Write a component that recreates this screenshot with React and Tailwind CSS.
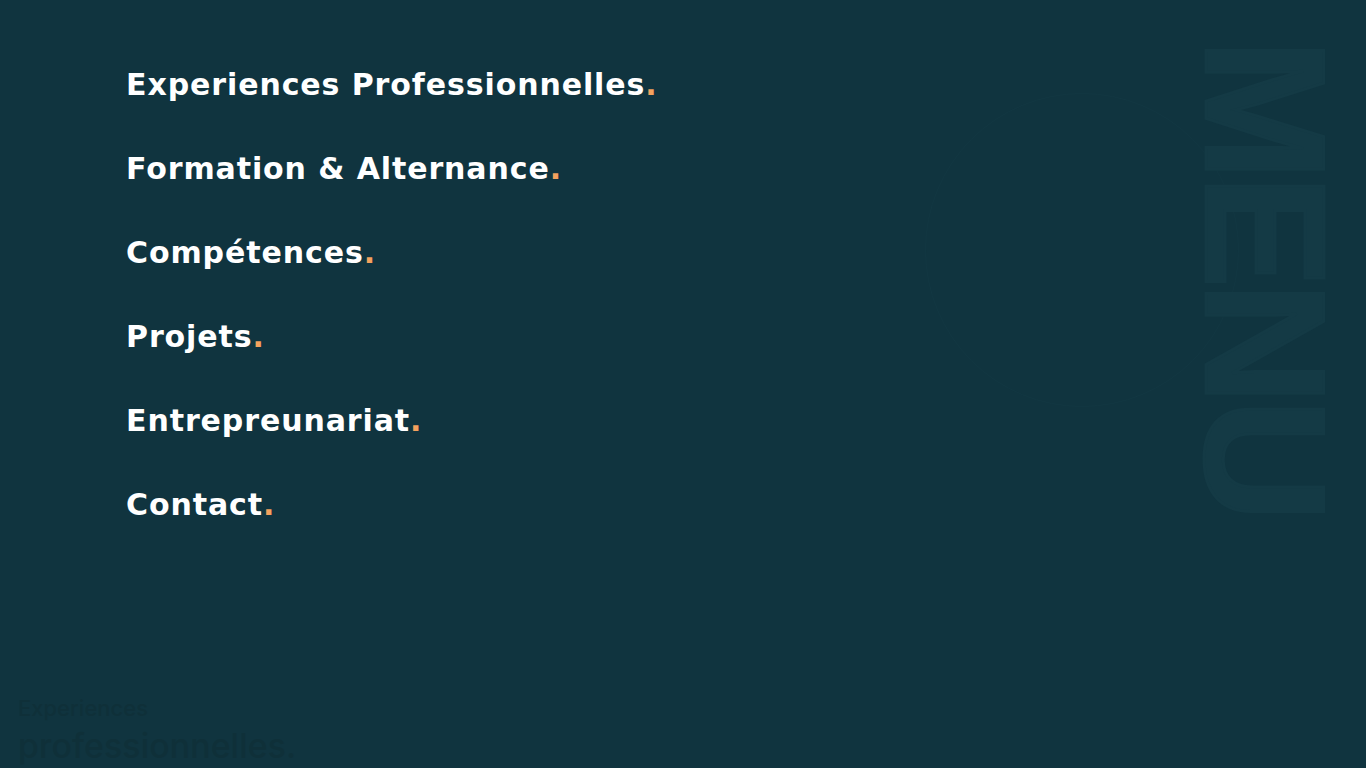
import React from "react";

const items = [
  "Experiences Professionnelles",
  "Formation & Alternance",
  "Compétences",
  "Projets",
  "Entrepreunariat",
  "Contact",
];

export default function App() {
  return (
    <div className="relative h-[768px] w-full overflow-hidden bg-[#10343f] font-['DejaVu_Sans',sans-serif]">
      {/* faint ghost layer of the page behind the menu */}
      <div className="pointer-events-none absolute left-[925px] top-[93px] h-[314px] w-[314px] rounded-full border border-[#123742]" />
      <div className="pointer-events-none absolute left-[18px] top-[697px] flex flex-col font-['Inter',sans-serif] text-[#0f3039]">
        <span className="text-[22px] font-medium leading-none">Experiences</span>
        <span className="mt-[10px] text-[34px] font-medium leading-none">professionnelles.</span>
      </div>

      {/* MENU vertical watermark */}
      <div className="pointer-events-none absolute left-[1180px] top-[39px] select-none font-['Liberation_Sans',sans-serif] text-[170px] font-bold leading-none tracking-[-0.035em] text-[#143a45] [-webkit-text-stroke:3px_#143a45] [writing-mode:vertical-rl]">
        MENU
      </div>

      {/* navigation */}
      <nav className="relative flex flex-col pl-[126px] pt-[42px]">
        {items.map((t) => (
          <a
            key={t}
            href="#"
            className="flex h-[84px] items-center text-[30px] font-bold tracking-[0.03em] text-white"
          >
            <span>
              {t}
              <span className="text-[#f4a25e]">.</span>
            </span>
          </a>
        ))}
      </nav>
    </div>
  );
}
